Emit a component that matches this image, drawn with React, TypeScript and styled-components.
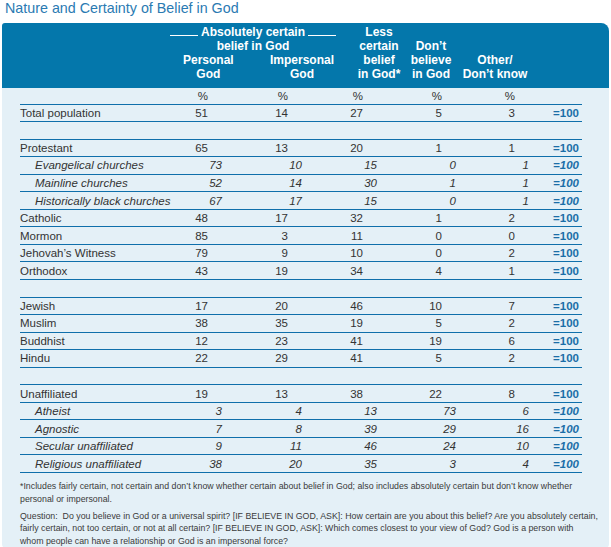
import React from 'react';
import styled, { createGlobalStyle } from 'styled-components';

const GlobalStyle = createGlobalStyle`
  html, body {
    margin: 0;
    padding: 0;
    background: #ffffff;
  }

  body {
    font-family: 'Liberation Sans', Arial, sans-serif;
    color: #333333;
  }
`;

const COLUMNS = '150px 52px 80px 75px 79px 73px 53px';

interface RowData {
  label: string;
  values: number[];
  sub?: boolean;
}

type Block = RowData[] | null;

const blocks: Block[] = [
  [{ label: 'Total population', values: [51, 14, 27, 5, 3] }],
  null,
  [
    { label: 'Protestant', values: [65, 13, 20, 1, 1] },
    { label: 'Evangelical churches', values: [73, 10, 15, 0, 1], sub: true },
    { label: 'Mainline churches', values: [52, 14, 30, 1, 1], sub: true },
    { label: 'Historically black churches', values: [67, 17, 15, 0, 1], sub: true },
    { label: 'Catholic', values: [48, 17, 32, 1, 2] },
    { label: 'Mormon', values: [85, 3, 11, 0, 0] },
    { label: 'Jehovah’s Witness', values: [79, 9, 10, 0, 2] },
    { label: 'Orthodox', values: [43, 19, 34, 4, 1] }
  ],
  null,
  [
    { label: 'Jewish', values: [17, 20, 46, 10, 7] },
    { label: 'Muslim', values: [38, 35, 19, 5, 2] },
    { label: 'Buddhist', values: [12, 23, 41, 19, 6] },
    { label: 'Hindu', values: [22, 29, 41, 5, 2] }
  ],
  null,
  [
    { label: 'Unaffiliated', values: [19, 13, 38, 22, 8] },
    { label: 'Atheist', values: [3, 4, 13, 73, 6], sub: true },
    { label: 'Agnostic', values: [7, 8, 39, 29, 16], sub: true },
    { label: 'Secular unaffiliated', values: [9, 11, 46, 24, 10], sub: true },
    { label: 'Religious unaffiliated', values: [38, 20, 35, 3, 4], sub: true }
  ]
];

const Title = styled.h1`
  margin: 0 0 6px 5px;
  font-size: 14.3px;
  line-height: 17px;
  font-weight: normal;
  color: #2a7ab2;
`;

const Panel = styled.section`
  margin-left: 2px;
  width: 607px;
  background: #e4f0f7;
  border-radius: 3px 8px 6px 6px;
  overflow: hidden;
  padding-bottom: 2px;
`;

const HeaderBand = styled.div`
  display: grid;
  grid-template-columns: 150px 166px 69px 52px 76px 1fr;
  align-items: end;
  background: #0477ab;
  color: #ffffff;
  font-weight: bold;
  font-size: 12px;
  line-height: 14px;
  padding: 2px 0 7px 18px;
`;

const HeadCell = styled.div<{ $shift?: number }>`
  text-align: center;
  padding-left: ${(p) => p.$shift || 0}px;
`;

const Group = styled.div`
  display: flex;
  flex-direction: column;
`;

const GroupTitle = styled.div`
  display: flex;
  align-items: baseline;
  gap: 3px;
  white-space: nowrap;
`;

const Rule = styled.span`
  flex: 1;
  height: 0;
  border-bottom: 1px solid #ffffff;
`;

const GroupSub = styled.div`
  text-align: center;
`;

const GroupCols = styled.div`
  display: flex;
  justify-content: space-between;
  padding: 0 2px 0 13px;
`;

const Table = styled.div`
  margin-left: 18px;
  width: 562px;
`;

const Row = styled.div<{ $sub?: boolean }>`
  display: grid;
  grid-template-columns: ${COLUMNS};
  align-items: center;
  box-sizing: border-box;
  height: 17.55px;
  border-bottom: 1px solid #0f6fab;
  font-size: 11.5px;
  font-style: ${(p) => (p.$sub ? 'italic' : 'normal')};
`;

const PercentRow = styled(Row)`
  height: 16.5px;
`;

const Label = styled.div<{ $sub?: boolean }>`
  padding-left: ${(p) => (p.$sub ? 15 : 0)}px;
  white-space: nowrap;
`;

const Value = styled.div<{ $sub?: boolean }>`
  text-align: right;
  padding-right: ${(p) => (p.$sub ? 0 : 14)}px;
`;

const Total = styled.div`
  text-align: right;
  padding-right: 3px;
  font-weight: bold;
  color: #1b6ea8;
`;

const Notes = styled.div`
  padding: 7px 11px 0 18px;
  font-size: 8.8px;
  line-height: 12.8px;
  color: #3a3a3a;

  p {
    margin: 0 0 4px;
  }

  p:last-child {
    margin-bottom: 0;
  }
`;

function DataRow ({ label, values, sub }: RowData): React.ReactElement {
  return (
    <Row $sub={sub}>
      <Label $sub={sub}>{label}</Label>
      {values.map((v, i) => (
        <Value key={i} $sub={sub}>{v}</Value>
      ))}
      <Total>=100</Total>
    </Row>
  );
}

export default function App (): React.ReactElement {
  return (
    <>
      <GlobalStyle />
      <Title>Nature and Certainty of Belief in God</Title>
      <Panel>
        <HeaderBand>
          <div />
          <Group>
            <GroupTitle>
              <Rule />
              Absolutely certain
              <Rule />
            </GroupTitle>
            <GroupSub>belief in God</GroupSub>
            <GroupCols>
              <HeadCell>Personal<br />God</HeadCell>
              <HeadCell>Impersonal<br />God</HeadCell>
            </GroupCols>
          </Group>
          <HeadCell $shift={17}>Less<br />certain<br />belief<br />in God*</HeadCell>
          <HeadCell>Don’t<br />believe<br />in God</HeadCell>
          <HeadCell>Other/<br />Don’t know</HeadCell>
          <div />
        </HeaderBand>
        <Table>
          <PercentRow>
            <div />
            {[0, 1, 2, 3, 4].map((i) => (
              <Value key={i}>%</Value>
            ))}
            <div />
          </PercentRow>
          {blocks.map((block, i) =>
            block
              ? block.map((r) => <DataRow key={r.label} {...r} />)
              : <Row key={`gap-${i}`} />
          )}
        </Table>
        <Notes>
          <p>*Includes fairly certain, not certain and don’t know whether certain about belief in God; also includes absolutely certain but don’t know whether personal or impersonal.</p>
          <p>Question:&nbsp; Do you believe in God or a universal spirit? [IF BELIEVE IN GOD, ASK]: How certain are you about this belief? Are you absolutely certain, fairly certain, not too certain, or not at all certain? [IF BELIEVE IN GOD, ASK]: Which comes closest to your view of God? God is a person with whom people can have a relationship or God is an impersonal force?</p>
        </Notes>
      </Panel>
    </>
  );
}
